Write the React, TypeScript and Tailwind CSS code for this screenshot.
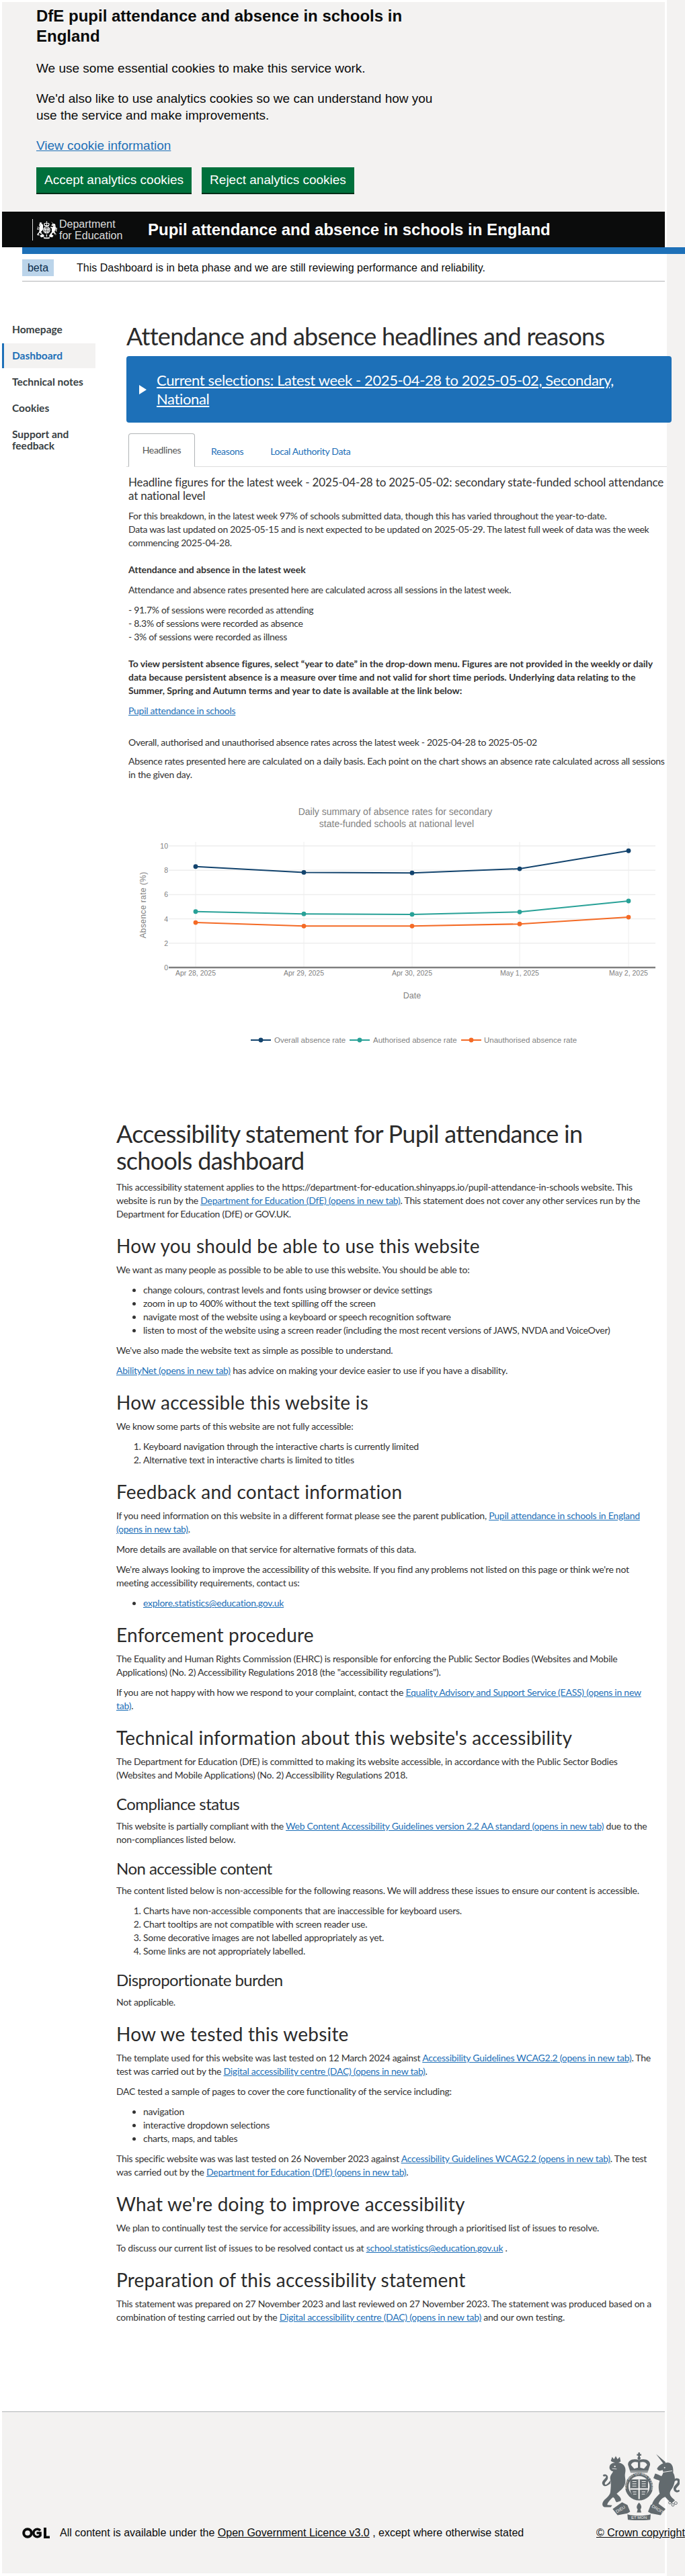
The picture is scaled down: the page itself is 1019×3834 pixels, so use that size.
import React from 'react';

const BODY_FONT = "font-[family-name:Lato,sans-serif] tracking-[-0.018em]";
const ARIAL = "font-[family-name:'Liberation_Sans',Arial,sans-serif]";

const Crest = ({ className, fill, bg, id, detail = false }: { className: string; fill: string; bg: string; id: string; detail?: boolean }) => (
  <svg className={className} viewBox="33 25 360 305" role="img" aria-label="Royal coat of arms">
    {/* crown */}
    <rect x="208" y="28" width="8" height="26" fill={fill} />
    <rect x="202" y="35" width="20" height="7" fill={fill} />
    <circle cx="212" cy="54" r="7" fill={fill} />
    <path d="M174 118 L163 84 C160 62 188 52 212 62 C236 52 264 62 261 84 L250 118 Z" fill={fill} />
    <path d="M176 84 C180 70 196 68 207 72 L207 96 L190 100 Z M217 72 C228 68 244 70 248 84 L234 100 L217 96 Z" fill={bg} />
    <rect x="172" y="108" width="80" height="10" fill={bg} opacity="0.35" />
    {/* garter and shield */}
    <circle cx="212" cy="180" r="62" fill={fill} />
    <circle cx="212" cy="180" r="47" fill={bg} />
    <path d="M172 148 H252 V190 C252 216 232 228 212 236 C192 228 172 216 172 190 Z" fill={fill} />
    <path d="M209 148 H215 V236 H209 Z M172 188 H252 V194 H172 Z" fill={bg} />
    <path d="M182 158 L200 158 M182 168 L200 168 M182 178 L200 178 M224 158 L242 158 M224 168 L242 168 M224 178 L242 178 M184 204 L200 204 M186 214 L200 214 M224 204 L240 204 M224 214 L238 214" stroke={bg} strokeWidth="3" />
    {detail && <path id={id} d="M172 222 A56 56 0 1 1 252 222" fill="none" />}
    {detail && (
      <text fill={bg} fontSize="14" fontFamily="Liberation Sans, sans-serif" letterSpacing="0">
        <textPath href={`#${id}`} startOffset="14%">HONI SOIT QUI MAL Y PENSE</textPath>
      </text>
    )}
    {/* lion */}
    <path d="M86 66 L92 48 L100 58 L108 44 L116 58 L126 48 L130 68 C120 76 100 76 86 66 Z" fill={fill} />
    <path d="M80 92 C82 76 104 70 124 74 C146 78 156 98 150 120 C146 138 156 150 148 172 C140 192 124 200 112 212 C122 222 136 232 130 244 L112 250 C104 246 108 236 96 228 C86 236 72 250 70 262 L92 264 L86 272 L58 272 C46 268 46 254 54 244 C64 232 82 222 84 204 C86 186 88 168 84 150 C80 130 92 124 96 112 C88 112 78 104 80 92 Z" fill={fill} />
    <path d="M84 166 C72 176 58 184 50 172 C42 160 54 150 62 142 C68 136 62 130 56 136 L50 130 C58 120 78 128 72 146 C68 156 56 162 60 170 C64 176 76 164 84 152 Z" fill={fill} />
    <circle cx="104" cy="90" r="3.5" fill={bg} />
    <path d="M92 100 L112 102" stroke={bg} strokeWidth="2.5" />
    {/* unicorn */}
    <path d="M288 35 L331 72 L322 80 Z" fill={fill} />
    <path d="M292 100 C304 78 328 70 346 74 C362 78 366 100 364 118 C374 134 374 154 366 176 C360 192 348 198 350 214 C352 226 366 234 372 242 L358 254 C346 246 338 236 328 226 C316 230 300 244 298 262 L284 268 L270 262 C272 244 290 226 304 212 C300 196 296 176 304 154 C296 150 284 148 276 142 L284 122 C292 124 306 130 312 134 C320 122 322 112 316 106 C308 110 298 112 292 100 Z" fill={fill} />
    <path d="M368 148 C380 138 396 144 396 158 C396 172 384 178 378 188 C374 196 384 200 390 194 L394 200 C384 212 364 204 366 186 C368 174 384 168 384 158 C384 150 374 152 366 162 Z" fill={fill} />
    <path d="M306 118 L360 110" stroke={bg} strokeWidth="3" />
    <circle cx="326" cy="96" r="3" fill={bg} />
    <circle cx="350" cy="252" r="6" fill="none" stroke={fill} strokeWidth="3" />
    <circle cx="363" cy="262" r="6" fill="none" stroke={fill} strokeWidth="3" />
    <circle cx="376" cy="254" r="6" fill="none" stroke={fill} strokeWidth="3" />
    {/* thistle */}
    <path d="M212 252 C222 262 226 274 218 282 L222 296 H202 L206 282 C198 274 202 262 212 252 Z" fill={fill} />
    {/* motto */}
    <path d="M94 280 L136 250 L160 262 L172 292 L160 300 L116 308 Z" fill={fill} />
    <path d="M330 280 L290 250 L264 262 L252 292 L264 300 L308 308 Z" fill={fill} />
    <path d="M160 304 C190 312 234 312 264 304 L262 328 C232 332 192 332 162 328 Z" fill={fill} />
    {detail && (
      <g fill={bg} textAnchor="middle" fontFamily="Liberation Sans, sans-serif" letterSpacing="0">
        <text x="130" y="288" fontSize="19" transform="rotate(-32 130 283)">DIEU</text>
        <text x="295" y="288" fontSize="19" transform="rotate(32 295 283)">DROIT</text>
        <text x="212" y="325" fontSize="18">ET MON</text>
      </g>
    )}
  </svg>
);

const OglLogo = () => (
  <svg className="w-[41px] h-4 shrink-0" viewBox="0 0 41 16" role="img" aria-label="OGL">
    <circle cx="8" cy="8" r="5.8" fill="none" stroke="#0b0c0c" strokeWidth="4" />
    <path d="M27 4.3 A5.8 5.8 0 1 0 27 11.7 V8 H21.5" fill="none" stroke="#0b0c0c" strokeWidth="3.6" />
    <path d="M32 0 H36 V12.4 H41 V16 H32 Z" fill="#0b0c0c" />
  </svg>
);

const A = ({ children }: { children: React.ReactNode }) => (
  <a href="#" className="text-[#1d70b8] underline">{children}</a>
);

const P = ({ children, className = 'mt-2.5' }: { children: React.ReactNode; className?: string }) => (
  <p className={className}>{children}</p>
);

const H2 = ({ children }: { children: React.ReactNode }) => (
  <h2 className="mt-[21px] mb-2.5 text-[28px] leading-[32px] tracking-[0.008em] text-[#2b2b2b]">{children}</h2>
);

const H3 = ({ children }: { children: React.ReactNode }) => (
  <h3 className="mt-5 mb-2.5 text-[24px] leading-[26px] tracking-[-0.023em] text-[#2b2b2b]">{children}</h3>
);

const days = ['Apr 28, 2025', 'Apr 29, 2025', 'Apr 30, 2025', 'May 1, 2025', 'May 2, 2025'];
const dayX = [291, 452, 613, 773, 935];
const yOf = (v: number) => 1440 - 18.1 * v;

const series = [
  { name: 'Overall absence rate', color: '#12436d', values: [8.3, 7.82, 7.78, 8.12, 9.6], lx: 373, tx: 408 },
  { name: 'Authorised absence rate', color: '#28a197', values: [4.6, 4.41, 4.37, 4.57, 5.47], lx: 520, tx: 555 },
  { name: 'Unauthorised absence rate', color: '#f46a25', values: [3.7, 3.41, 3.41, 3.58, 4.14], lx: 686, tx: 720 },
];

const AbsenceChart = () => (
  <svg className="block mt-[27px] ml-[-3px] w-[804px] h-[400px]" viewBox="188 1190 804 400" fontFamily="Liberation Sans, Arial, sans-serif" letterSpacing="0">
    <text x="588" y="1213" textAnchor="middle" fontSize="14" fill="#7f7f7f">Daily summary of absence rates for secondary</text>
    <text x="590" y="1231" textAnchor="middle" fontSize="14" fill="#7f7f7f">state-funded schools at national level</text>
    {[2, 4, 6, 8, 10].map((v) => (
      <line key={v} x1="251" x2="975" y1={yOf(v)} y2={yOf(v)} stroke="#eeeeee" strokeWidth="1.5" />
    ))}
    {dayX.map((x) => (
      <line key={x} x1={x} x2={x} y1="1253" y2="1440" stroke="#eeeeee" strokeWidth="1" />
    ))}
    <line x1="251" x2="975" y1="1440" y2="1440" stroke="#7f7f7f" strokeWidth="2.5" />
    {[0, 2, 4, 6, 8, 10].map((v) => (
      <text key={v} x="250" y={yOf(v) + 4} textAnchor="end" fontSize="10.5" fill="#7f7f7f">{v}</text>
    ))}
    {days.map((d, i) => (
      <text key={d} x={dayX[i]} y="1452" textAnchor="middle" fontSize="10.5" fill="#7f7f7f">{d}</text>
    ))}
    <text x="613" y="1486" textAnchor="middle" fontSize="12.5" fill="#7f7f7f">Date</text>
    <text transform="translate(217 1347) rotate(-90)" textAnchor="middle" fontSize="12" letterSpacing="0.4" fill="#7f7f7f">Absence rate (%)</text>
    {series.map((s) => (
      <g key={s.name}>
        <polyline points={s.values.map((v, i) => `${dayX[i]},${yOf(v)}`).join(' ')} fill="none" stroke={s.color} strokeWidth="2" />
        {s.values.map((v, i) => (
          <circle key={i} cx={dayX[i]} cy={yOf(v)} r="3.4" fill={s.color} />
        ))}
        <line x1={s.lx} x2={s.lx + 30} y1="1548" y2="1548" stroke={s.color} strokeWidth="2" />
        <circle cx={s.lx + 15} cy="1548" r="3.4" fill={s.color} />
        <text x={s.tx} y="1552" fontSize="11.5" fill="#7f7f7f">{s.name}</text>
      </g>
    ))}
  </svg>
);

const navItems = ['Homepage', 'Dashboard', 'Technical notes', 'Cookies'];

export default function App() {
  return (
    <div className={`relative w-[1019px] h-[3834px] overflow-hidden pt-[3px] pl-[3px] bg-[linear-gradient(to_right,#ffffff_992px,#f3f2f1_992px)] text-[#333333] ${ARIAL}`}>
      {/* Cookie banner */}
      <section className="w-[986px] h-[312px] bg-[#f3f2f1] pt-1.5 pl-[51px] text-[#0b0c0c]">
        <div className="w-[600px]">
          <h2 className="text-[24px] leading-[30px] font-bold">DfE pupil attendance and absence in schools in England</h2>
          <p className="mt-5 text-[19px] leading-[25px]">We use some essential cookies to make this service work.</p>
          <p className="mt-5 text-[19px] leading-[25px]">We'd also like to use analytics cookies so we can understand how you use the service and make improvements.</p>
          <p className="mt-5 text-[19px] leading-[25px]">
            <a href="#" className="text-[#1d70b8] underline">View cookie information</a>
          </p>
        </div>
        <div className="mt-5 flex gap-[15px]">
          <button className="w-[231px] h-10 bg-[#00703c] border-b-2 border-[#002d18] text-white text-[19px]">Accept analytics cookies</button>
          <button className="w-[227px] h-10 bg-[#00703c] border-b-2 border-[#002d18] text-white text-[19px]">Reject analytics cookies</button>
        </div>
      </section>

      {/* Header */}
      <header className="w-[986px] h-[53px] bg-[#0b0c0c] flex items-center pl-[45px] text-white">
        <div className="flex items-center w-[172px] h-8 border-l border-[#dddddd] pl-[5px]">
          <Crest id="garter-header" className="w-[31px] h-8 shrink-0" fill="#ffffff" bg="#0b0c0c" />
          <div className="ml-[3px] text-[16px] leading-[17px] text-[#dddddd] whitespace-nowrap">
            Department<br />for Education
          </div>
        </div>
        <div className="text-[24px] font-bold whitespace-nowrap">Pupil attendance and absence in schools in England</div>
      </header>

      {/* Phase banner */}
      <div className="ml-[30px]">
        <div className="w-[986px] h-2.5 bg-[#1d70b8]" />
        <div className="w-[956px] flex items-start pt-2 pb-[7px] border-b border-[#b1b4b6] text-[16px]">
          <span className="w-[47px] h-[25px] bg-[#bbd4ea] text-[#0c2d4a] flex items-center justify-center">beta</span>
          <span className="ml-[34px] leading-[25px] text-[#0b0c0c]">This Dashboard is in beta phase and we are still reviewing performance and reliability.</span>
        </div>
      </div>

      {/* Dashboard */}
      <div className={`flex items-start ${BODY_FONT}`}>
        <nav className="w-[139px] shrink-0 mt-[53px] text-[15.5px] font-bold leading-[17px] tracking-normal">
          {navItems.map((item) => (
            <div
              key={item}
              className={item === 'Dashboard'
                ? 'h-[37px] mb-0.5 flex items-center pl-3 border-l-[3px] border-[#1d70b8] bg-[#f3f2f1] text-[#1d70b8]'
                : 'h-[37px] mb-0.5 flex items-center pl-[15px] text-[#383f43]'}
            >
              {item}
            </div>
          ))}
          <div className="pl-[15px] pt-[10px] text-[#383f43]">Support and<br />feedback</div>
        </nav>

        <main className="ml-[46px] w-[804px] shrink-0 mt-[61px] text-[14px] leading-5">
          <h1 className="text-[36px] leading-10 tracking-[-0.02em] text-[#2b2b2b] mb-2.5 whitespace-nowrap">Attendance and absence headlines and reasons</h1>
          <div className="w-[811px] h-[99px] bg-[#1d70b8] rounded-[4px] flex items-center pl-[19px] text-white">
            <span className="w-0 h-0 border-y-[7px] border-y-transparent border-l-[11px] border-l-white shrink-0" />
            <span className="ml-[15px] w-[720px] text-[22px] leading-7 tracking-[-0.017em] underline">Current selections: Latest week - 2025-04-28 to 2025-05-02, Secondary, National</span>
          </div>

          {/* Tabs */}
          <div className="mt-4 h-[50px] flex border-b border-[#dddddd] pl-[3px] tracking-[-0.024em]">
            <div className="w-[99px] h-[50px] border border-b-white border-[#b1b4b6] rounded-t-[4px] flex items-center justify-center text-[#555555] bg-white">Headlines</div>
            <div className="ml-6 pt-[17px] text-[#1d70b8]">Reasons</div>
            <div className="ml-10 pt-[17px] text-[#1d70b8]">Local Authority Data</div>
          </div>

          <div className="pl-[3px]">
            <h3 className="mt-[13px] text-[17px] leading-5 tracking-[-0.009em] text-[#333333]">Headline figures for the latest week - 2025-04-28 to 2025-05-02: secondary state-funded school attendance at national level</h3>
            <P>For this breakdown, in the latest week 97% of schools submitted data, though this has varied throughout the year-to-date.<br />Data was last updated on 2025-05-15 and is next expected to be updated on 2025-05-29. The latest full week of data was the week commencing 2025-04-28.</P>
            <P className="mt-5 font-bold tracking-[-0.004em]">Attendance and absence in the latest week</P>
            <P>Attendance and absence rates presented here are calculated across all sessions in the latest week.</P>
            <P>- 91.7% of sessions were recorded as attending<br />- 8.3% of sessions were recorded as absence<br />- 3% of sessions were recorded as illness</P>
            <P className="mt-5 font-bold tracking-[-0.004em]">To view persistent absence figures, select “year to date” in the drop-down menu. Figures are not provided in the weekly or daily data because persistent absence is a measure over time and not valid for short time periods. Underlying data relating to the Summer, Spring and Autumn terms and year to date is available at the link below:</P>
            <P><A>Pupil attendance in schools</A></P>
            <P className="mt-[27px]">Overall, authorised and unauthorised absence rates across the latest week - 2025-04-28 to 2025-05-02</P>
            <P className="mt-2">Absence rates presented here are calculated on a daily basis. Each point on the chart shows an absence rate calculated across all sessions in the given day.</P>
            <AbsenceChart />
          </div>
        </main>
      </div>

      {/* Accessibility statement */}
      <section className={`mt-[77px] ml-[170px] w-[800px] text-[14px] leading-5 ${BODY_FONT}`}>
        <h1 className="w-[785px] text-[36px] leading-10 tracking-[-0.02em] text-[#2b2b2b]">Accessibility statement for Pupil attendance in schools dashboard</h1>
        <P>This accessibility statement applies to the https://department-for-education.shinyapps.io/pupil-attendance-in-schools website. This<br />website is run by the <A>Department for Education (DfE) (opens in new tab)</A>. This statement does not cover any other services run by the<br />Department for Education (DfE) or GOV.UK.</P>

        <H2>How you should be able to use this website</H2>
        <p>We want as many people as possible to be able to use this website. You should be able to:</p>
        <ul className="mt-2.5 pl-10 list-disc">
          <li>change colours, contrast levels and fonts using browser or device settings</li>
          <li>zoom in up to 400% without the text spilling off the screen</li>
          <li>navigate most of the website using a keyboard or speech recognition software</li>
          <li>listen to most of the website using a screen reader (including the most recent versions of JAWS, NVDA and VoiceOver)</li>
        </ul>
        <P>We've also made the website text as simple as possible to understand.</P>
        <P><A>AbilityNet (opens in new tab)</A> has advice on making your device easier to use if you have a disability.</P>

        <H2>How accessible this website is</H2>
        <p>We know some parts of this website are not fully accessible:</p>
        <ol className="mt-2.5 pl-10 list-decimal">
          <li>Keyboard navigation through the interactive charts is currently limited</li>
          <li>Alternative text in interactive charts is limited to titles</li>
        </ol>

        <H2>Feedback and contact information</H2>
        <p>If you need information on this website in a different format please see the parent publication, <A>Pupil attendance in schools in England<br />(opens in new tab)</A>.</p>
        <P>More details are available on that service for alternative formats of this data.</P>
        <P>We're always looking to improve the accessibility of this website. If you find any problems not listed on this page or think we're not<br />meeting accessibility requirements, contact us:</P>
        <ul className="mt-2.5 pl-10 list-disc">
          <li><A>explore.statistics@education.gov.uk</A></li>
        </ul>

        <H2>Enforcement procedure</H2>
        <p>The Equality and Human Rights Commission (EHRC) is responsible for enforcing the Public Sector Bodies (Websites and Mobile<br />Applications) (No. 2) Accessibility Regulations 2018 (the "accessibility regulations").</p>
        <P>If you are not happy with how we respond to your complaint, contact the <A>Equality Advisory and Support Service (EASS) (opens in new<br />tab)</A>.</P>

        <H2>Technical information about this website's accessibility</H2>
        <p>The Department for Education (DfE) is committed to making its website accessible, in accordance with the Public Sector Bodies<br />(Websites and Mobile Applications) (No. 2) Accessibility Regulations 2018.</p>

        <H3>Compliance status</H3>
        <p>This website is partially compliant with the <A>Web Content Accessibility Guidelines version 2.2 AA standard (opens in new tab)</A> due to the<br />non-compliances listed below.</p>

        <H3>Non accessible content</H3>
        <p>The content listed below is non-accessible for the following reasons. We will address these issues to ensure our content is accessible.</p>
        <ol className="mt-2.5 pl-10 list-decimal">
          <li>Charts have non-accessible components that are inaccessible for keyboard users.</li>
          <li>Chart tooltips are not compatible with screen reader use.</li>
          <li>Some decorative images are not labelled appropriately as yet.</li>
          <li>Some links are not appropriately labelled.</li>
        </ol>

        <H3>Disproportionate burden</H3>
        <p>Not applicable.</p>

        <H2>How we tested this website</H2>
        <p>The template used for this website was last tested on 12 March 2024 against <A>Accessibility Guidelines WCAG2.2 (opens in new tab)</A>. The<br />test was carried out by the <A>Digital accessibility centre (DAC) (opens in new tab)</A>.</p>
        <P>DAC tested a sample of pages to cover the core functionality of the service including:</P>
        <ul className="mt-2.5 pl-10 list-disc">
          <li>navigation</li>
          <li>interactive dropdown selections</li>
          <li>charts, maps, and tables</li>
        </ul>
        <P>This specific website was was last tested on 26 November 2023 against <A>Accessibility Guidelines WCAG2.2 (opens in new tab)</A>. The test<br />was carried out by the <A>Department for Education (DfE) (opens in new tab)</A>.</P>

        <H2>What we're doing to improve accessibility</H2>
        <p>We plan to continually test the service for accessibility issues, and are working through a prioritised list of issues to resolve.</p>
        <P>To discuss our current list of issues to be resolved contact us at <A>school.statistics@education.gov.uk</A> .</P>

        <H2>Preparation of this accessibility statement</H2>
        <p>This statement was prepared on 27 November 2023 and last reviewed on 27 November 2023. The statement was produced based on a<br />combination of testing carried out by the <A>Digital accessibility centre (DAC) (opens in new tab)</A> and our own testing.</p>
      </section>

      {/* Footer */}
      <footer className="mt-[130px] w-[986px] h-[241px] bg-[#f3f2f1] border-t border-[#b1b4b6] flex items-end pl-[30px] pb-[50px] text-[16px] leading-5 text-[#0b0c0c]">
        <div className="w-[854px] shrink-0 flex items-center">
          <OglLogo />
          <span className="ml-[15px]">All content is available under the <a href="#" className="underline">Open Government Licence v3.0</a> , except where otherwise stated</span>
        </div>
        <div className="shrink-0 whitespace-nowrap">
          <Crest id="garter-footer" detail className="ml-1 mb-[9px] w-[120px] h-[102px]" fill="#626a6e" bg="#f3f2f1" />
          <a href="#" className="underline">© Crown copyright</a>
        </div>
      </footer>
    </div>
  );
}
